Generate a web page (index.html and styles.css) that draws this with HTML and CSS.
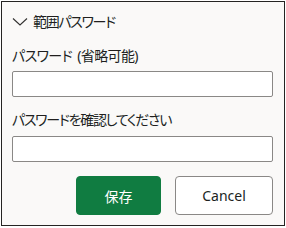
FILE: index.html
```html
<!DOCTYPE html>
<html lang="ja">
<head>
  <meta charset="UTF-8">
  <meta name="viewport" content="width=device-width, initial-scale=1.0">
  <title>範囲パスワード</title>
  <link rel="stylesheet" href="styles.css">
</head>
<body>
  <div class="panel">
    <div class="section-head">
      <svg class="chevron" width="16" height="9" viewBox="0 0 16 9">
        <polyline points="1,1.5 8,8 15,1.5" fill="none" stroke="#323130" stroke-width="1.1"/>
      </svg>
      <span>範囲パスワード</span>
    </div>

    <label class="field-label" for="pw">パスワード (省略可能)</label>
    <input class="field" id="pw" type="password">

    <label class="field-label second" for="pw2">パスワードを確認してください</label>
    <input class="field" id="pw2" type="password">

    <div class="actions">
      <button class="btn primary">保存</button>
      <button class="btn">Cancel</button>
    </div>
  </div>
</body>
</html>
```

FILE: styles.css
```css
body {
  margin: 0;
  background: #fff;
  font-family: "Noto Sans", "Noto Sans CJK JP", sans-serif;
  font-feature-settings: "palt";
  color: #201f1e;
}
.panel {
  box-sizing: border-box;
  width: 284px;
  height: 225px;
  margin: 1px 0 0 1px;
  padding: 10px 11px 0 10px;
  background: #faf9f8;
  border: 1px solid #252423;
}
.section-head {
  display: flex;
  align-items: center;
  gap: 5px;
  height: 20px;
  font-size: 14px;
  line-height: 20px;
  letter-spacing: -1.3px;
}
.chevron {
  display: block;
  margin-top: -1px;
}
.field-label {
  display: block;
  margin-top: 14px;
  font-size: 14px;
  line-height: 20px;
  letter-spacing: -0.6px;
  word-spacing: 2px;
}
.field-label.second {
  margin-top: 13px;
  letter-spacing: -1.3px;
}
.field {
  display: block;
  box-sizing: border-box;
  width: 261px;
  height: 26px;
  margin: 5px 0 0;
  padding: 0 6px;
  border: 1px solid #8a8886;
  border-radius: 2px;
  background: #fff;
  font: inherit;
}
.field-label.second + .field {
  margin-top: 6px;
}
.actions {
  display: flex;
  justify-content: flex-end;
  gap: 14px;
  width: 261px;
  margin-top: 14px;
}
.btn {
  box-sizing: border-box;
  width: 98px;
  height: 39px;
  padding: 0;
  border: 1px solid #8a8886;
  border-radius: 4px;
  background: #fff;
  color: #201f1e;
  font-family: "Noto Sans", "Noto Sans CJK JP", sans-serif;
  font-size: 14px;
}
.btn.primary {
  width: 85px;
  border-color: #107c41;
  background: #107c41;
  color: #fff;
}
```
